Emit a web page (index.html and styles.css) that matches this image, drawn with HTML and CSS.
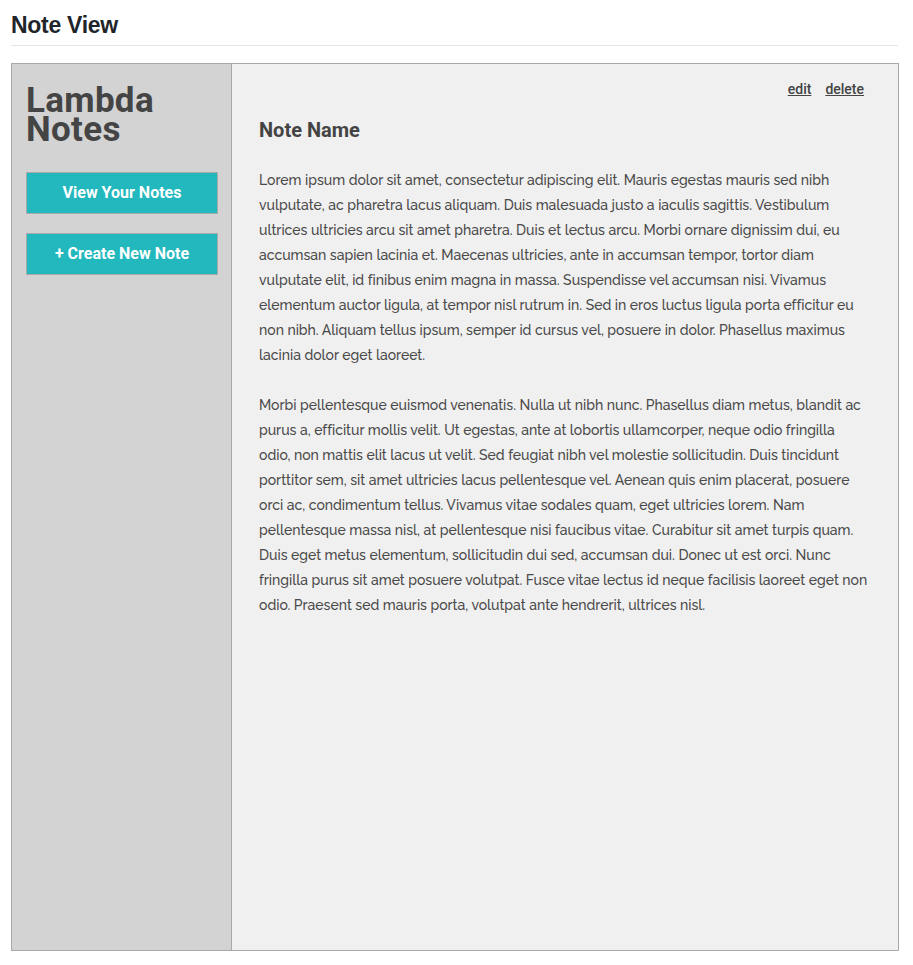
FILE: index.html
```html
<!DOCTYPE html>
<html>
<head>
<meta charset="utf-8">
<link rel="stylesheet" href="styles.css">
</head>
<body>
<div class="page">
  <h1 class="page-title">Note View</h1>
  <div class="frame">
    <aside class="sidebar">
      <div class="brand"><div>Lambda</div><div>Notes</div></div>
      <a class="btn" href="#">View Your Notes</a>
      <a class="btn" href="#">+ Create New Note</a>
    </aside>
    <main class="content">
      <div class="actions"><a href="#">edit</a><a href="#">delete</a></div>
      <h2 class="note-title">Note Name</h2>
      <p>Lorem ipsum dolor sit amet, consectetur adipiscing elit. Mauris egestas mauris sed nibh vulputate, ac pharetra lacus aliquam. Duis malesuada justo a iaculis sagittis. Vestibulum ultrices ultricies arcu sit amet pharetra. Duis et lectus arcu. Morbi ornare dignissim dui, eu accumsan sapien lacinia et. Maecenas ultricies, ante in accumsan tempor, tortor diam vulputate elit, id finibus enim magna in massa. Suspendisse vel accumsan nisi. Vivamus elementum auctor ligula, at tempor nisl rutrum in. Sed in eros luctus ligula porta efficitur eu non nibh. Aliquam tellus ipsum, semper id cursus vel, posuere in dolor. Phasellus maximus lacinia dolor eget laoreet.</p>
      <p>Morbi pellentesque euismod venenatis. Nulla ut nibh nunc. Phasellus diam metus, blandit ac purus a, efficitur mollis velit. Ut egestas, ante at lobortis ullamcorper, neque odio fringilla odio, non mattis elit lacus ut velit. Sed feugiat nibh vel molestie sollicitudin. Duis tincidunt porttitor sem, sit amet ultricies lacus pellentesque vel. Aenean quis enim placerat, posuere orci ac, condimentum tellus. Vivamus vitae sodales quam, eget ultricies lorem. Nam pellentesque massa nisl, at pellentesque nisi faucibus vitae. Curabitur sit amet turpis quam. Duis eget metus elementum, sollicitudin dui sed, accumsan dui. Donec ut est orci. Nunc fringilla purus sit amet posuere volutpat. Fusce vitae lectus id neque facilisis laoreet eget non odio. Praesent sed mauris porta, volutpat ante hendrerit, ultrices nisl.</p>
    </main>
  </div>
</div>
</body>
</html>
```
FILE: styles.css
```css
html, body {
  margin: 0;
  padding: 0;
  background: #ffffff;
}
.page {
  padding: 0 15px 0 11px;
}
.page-title {
  margin: 0;
  padding-top: 11px;
  height: 34px;
  font-family: "Liberation Sans", Arial, sans-serif;
  font-weight: bold;
  font-size: 23px;
  line-height: 28px;
  color: #212529;
  letter-spacing: -0.3px;
  border-bottom: 1px solid #e6e6e6;
}
.frame {
  margin-top: 17px;
  display: flex;
  height: 888px;
  width: 888px;
  box-sizing: border-box;
  border: 1px solid #a9a9a9;
}
.sidebar {
  width: 220px;
  flex: none;
  background: #d3d3d3;
  border-right: 1px solid #a9a9a9;
  padding: 20px 13px 0 14px;
  box-sizing: border-box;
}
.brand {
  font-family: Roboto, "Liberation Sans", sans-serif;
  font-weight: bold;
  font-size: 35px;
  line-height: 29px;
  color: #444444;
  letter-spacing: 0.3px;
  padding-top: 2px;
  margin-bottom: 28px;
}
.btn {
  display: block;
  height: 42px;
  box-sizing: border-box;
  border: 1px solid #a9a9a9;
  background: #23b8bd;
  color: #ffffff;
  text-decoration: none;
  text-align: center;
  font-family: Roboto, "Liberation Sans", sans-serif;
  font-weight: bold;
  font-size: 16px;
  line-height: 40px;
  margin-bottom: 19px;
}
.content {
  flex: 1;
  background: #f0f0f0;
  padding: 16px 30px 0 27px;
  font-family: Raleway, Lato, "Open Sans", sans-serif;
  color: #4a4a4a;
}
.actions {
  display: flex;
  justify-content: flex-end;
  gap: 14px;
  padding-right: 4px;
  font-family: Roboto, "Liberation Sans", sans-serif;
  font-weight: 500;
  font-size: 14px;
  line-height: 18px;
}
.actions a {
  color: #444444;
  text-decoration: underline;
}
.note-title {
  margin: 20px 0 0;
  font-family: Roboto, "Liberation Sans", sans-serif;
  font-weight: bold;
  font-size: 20px;
  line-height: 24px;
  color: #444444;
}
.content p {
  margin: 26px 0 0;
  font-size: 14px;
  font-weight: 500;
  line-height: 25px;
  letter-spacing: -0.01px;
}
.content p + p {
  margin-top: 25px;
}
```
